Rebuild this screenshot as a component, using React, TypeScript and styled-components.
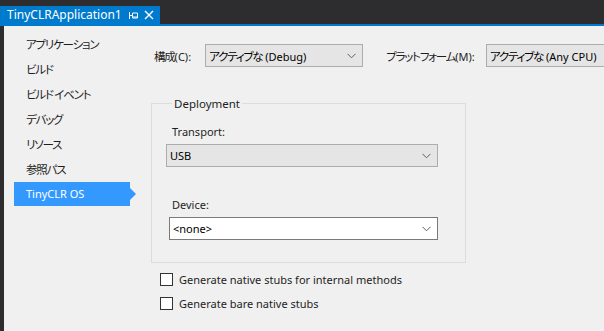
import React from 'react'
import styled, { createGlobalStyle } from 'styled-components'

const GlobalStyle = createGlobalStyle`
  html, body {
    margin: 0;
    padding: 0;
    background: #2d2d30;
  }
  body {
    font-family: "Segoe UI", "Noto Sans", "Noto Sans CJK JP", sans-serif;
    font-size: 11px;
  }
`

const Window = styled.div`
  width: 604px;
  height: 331px;
  display: flex;
  flex-direction: column;
  background: #2d2d30;
  overflow: hidden;
`

const TabWell = styled.div`
  height: 26px;
  padding-top: 6px;
  box-sizing: border-box;
  display: flex;
  border-bottom: 2px solid #007acc;
`

const DocTab = styled.div`
  width: 160px;
  height: 18px;
  background: #007acc;
  color: #ffffff;
  display: flex;
  align-items: center;
  padding-left: 7px;
  box-sizing: border-box;
`

const TabTitle = styled.span`
  flex: 1;
  font-size: 12px;
  line-height: 18px;
  white-space: nowrap;
`

const TabIcon = styled.svg`
  display: block;
  margin-right: 6px;
`

const Body = styled.div`
  flex: 1;
  display: flex;
  padding-left: 4px;
  min-height: 0;
`

const Content = styled.div`
  flex: 1;
  display: flex;
  background: #f0f0f0;
  color: #1e1e1e;
  min-width: 0;
`

const Ja = styled.span`
  font-family: "Noto Sans CJK JP", sans-serif;
  font-size: 11.5px;
  letter-spacing: -1.2px;
  font-feature-settings: "palt";
`

const Nav = styled.div`
  width: 136px;
  padding: 6px 0 0 10px;
  box-sizing: border-box;
  display: flex;
  flex-direction: column;
  gap: 1px;
  flex-shrink: 0;
`

const NavItem = styled.div<{ $active?: boolean }>`
  position: relative;
  width: 116px;
  height: 24px;
  line-height: 24px;
  padding-left: 12px;
  box-sizing: border-box;
  white-space: nowrap;
  background: ${(p) => (p.$active ? '#3399ff' : 'transparent')};
  color: ${(p) => (p.$active ? '#ffffff' : '#1e1e1e')};

  &::after {
    content: '';
    display: ${(p) => (p.$active ? 'block' : 'none')};
    position: absolute;
    left: 116px;
    top: 6px;
    border-top: 6px solid transparent;
    border-bottom: 6px solid transparent;
    border-left: 6px solid #3399ff;
  }
`

const Main = styled.div`
  flex: 1;
  min-width: 0;
  padding: 18px 0 0 14px;
  display: flex;
  flex-direction: column;
  overflow: hidden;
`

const ConfigRow = styled.div`
  display: flex;
  align-items: center;
  white-space: nowrap;
`

const RowLabel = styled.span<{ $lead?: number; $gap?: number }>`
  margin-left: ${(p) => p.$lead ?? 0}px;
  margin-right: ${(p) => p.$gap ?? 11}px;
  flex-shrink: 0;
`

const Combo = styled.div<{ $width: number; $white?: boolean; $shift?: number }>`
  width: ${(p) => p.$width}px;
  height: 23px;
  flex-shrink: 0;
  box-sizing: border-box;
  margin-left: ${(p) => p.$shift ?? 0}px;
  border: 1px solid ${(p) => (p.$white ? '#7a7a7a' : '#acacac')};
  background: ${(p) => (p.$white ? '#ffffff' : '#e5e5e5')};
  color: #000000;
  display: flex;
  align-items: center;
  padding: 0 6px 0 3px;
  white-space: nowrap;
`

const ComboText = styled.span`
  flex: 1;
  overflow: hidden;
`

const Chevron = styled.svg`
  display: block;
  flex-shrink: 0;
`

const GroupBox = styled.fieldset`
  margin: 29px 0 0 -3px;
  width: 315px;
  height: 167px;
  box-sizing: border-box;
  border: 1px solid #dcdcdc;
  padding: 0 0 0 14px;
  display: flex;
  flex-direction: column;
`

const GroupLegend = styled.legend`
  margin-left: 6px;
  padding: 0 2px;
  font-size: 11.5px;
  color: #1e1e1e;
`

const FieldLabel = styled.div<{ $top: number }>`
  margin: ${(p) => p.$top}px 0 4px 6px;
  line-height: 16px;
`

const CheckList = styled.div`
  display: flex;
  flex-direction: column;
  gap: 10px;
  margin: 9px 0 0 6px;
`

const CheckRow = styled.label`
  display: flex;
  align-items: center;
  gap: 6px;
  height: 14px;
`

const Box = styled.span`
  width: 13px;
  height: 13px;
  box-sizing: border-box;
  border: 1px solid #333333;
  background: #ffffff;
  flex-shrink: 0;
`

const DownChevron = () => (
  <Chevron width="9" height="6" viewBox="0 0 9 6">
    <path d="M0.5 0.8 L4.5 4.8 L8.5 0.8" fill="none" stroke="#606060" strokeWidth="1" />
  </Chevron>
)

const navItems = ['アプリケーション', 'ビルド', 'ビルド イベント', 'デバッグ', 'リソース', '参照パス']

export default function App() {
  return (
    <>
      <GlobalStyle />
      <Window>
        <TabWell>
          <DocTab>
            <TabTitle>TinyCLRApplication1</TabTitle>
            <TabIcon width="9" height="9" viewBox="0 0 9 9">
              <path d="M0.5 1 V8 M0.5 4.5 H3 M3.5 2 H8.5 V7 H3.5 Z M3.5 6 H8.5" fill="none" stroke="#ffffff" strokeWidth="1" />
            </TabIcon>
            <TabIcon width="10" height="10" viewBox="0 0 10 10">
              <path d="M1 1 L9 9 M9 1 L1 9" fill="none" stroke="#ffffff" strokeWidth="1.4" />
            </TabIcon>
          </DocTab>
        </TabWell>
        <Body>
          <Content>
            <Nav>
              {navItems.map((n) => (
                <NavItem key={n}>
                  <Ja>{n}</Ja>
                </NavItem>
              ))}
              <NavItem $active>TinyCLR OS</NavItem>
            </Nav>
            <Main>
              <ConfigRow>
                <RowLabel $gap={14}>
                  <Ja>構成</Ja>(C):
                </RowLabel>
                <Combo $width={158}>
                  <ComboText>
                    <Ja>アクティブな</Ja> (Debug)
                  </ComboText>
                  <DownChevron />
                </Combo>
                <RowLabel $lead={23}>
                  <Ja>プラットフォーム</Ja>(M):
                </RowLabel>
                <Combo $width={158}>
                  <ComboText>
                    <Ja>アクティブな</Ja> (Any CPU)
                  </ComboText>
                  <DownChevron />
                </Combo>
              </ConfigRow>
              <GroupBox>
                <GroupLegend>Deployment</GroupLegend>
                <FieldLabel $top={13}>Transport:</FieldLabel>
                <Combo $width={272}>
                  <ComboText>USB</ComboText>
                  <DownChevron />
                </Combo>
                <FieldLabel $top={30}>Device:</FieldLabel>
                <Combo $width={269} $white $shift={3}>
                  <ComboText>&lt;none&gt;</ComboText>
                  <DownChevron />
                </Combo>
              </GroupBox>
              <CheckList>
                <CheckRow>
                  <Box />
                  Generate native stubs for internal methods
                </CheckRow>
                <CheckRow>
                  <Box />
                  Generate bare native stubs
                </CheckRow>
              </CheckList>
            </Main>
          </Content>
        </Body>
      </Window>
    </>
  )
}
